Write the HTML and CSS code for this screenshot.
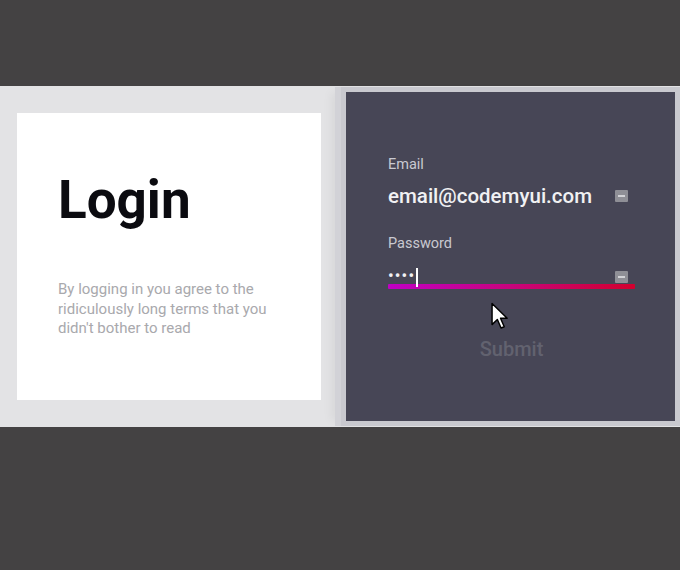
FILE: index.html
```html
<!DOCTYPE html>
<html lang="en">
<head>
<meta charset="utf-8">
<title>Login</title>
<link rel="stylesheet" href="styles.css">
</head>
<body>
<main class="stage">
  <section class="intro">
    <h1 class="intro-title">Login</h1>
    <p class="intro-text">By logging in you agree to the ridiculously long terms that you didn't bother to read</p>
  </section>

  <section class="panel">
    <form class="login-form">
      <div class="field">
        <span class="field-label">Email</span>
        <div class="field-row">
          <span class="field-value">email@codemyui.com</span>
          <span class="autofill" aria-hidden="true">
            <svg width="13" height="12" viewBox="0 0 13 12"><rect width="13" height="12" rx="1" fill="#8f8f96"/><rect x="3" y="5" width="7" height="2" fill="#d2d2d6"/></svg>
          </span>
        </div>
        <div class="field-line"></div>
      </div>

      <div class="field">
        <span class="field-label">Password</span>
        <div class="field-row">
          <span class="field-value field-secret">••••<span class="caret"></span></span>
          <span class="autofill autofill-low" aria-hidden="true">
            <svg width="13" height="12" viewBox="0 0 13 12"><rect width="13" height="12" rx="1" fill="#8f8f96"/><rect x="3" y="5" width="7" height="2" fill="#d2d2d6"/></svg>
          </span>
        </div>
        <div class="field-line field-line-active"></div>
      </div>

      <button type="button" class="submit">Submit</button>
    </form>

    <svg class="pointer" width="18" height="28" viewBox="-0.8 -0.8 13.6 20.6" aria-hidden="true">
      <path d="M0 0 L0 16 L4 12.2 L6.8 18.6 L9.2 17.6 L6.4 11.2 L11.4 11.2 Z" fill="#ffffff" stroke="#000000" stroke-width="1.1" stroke-linejoin="round"/>
    </svg>
  </section>
</main>
</body>
</html>
```

FILE: styles.css
```css
* {
  box-sizing: border-box;
}

html, body {
  margin: 0;
  padding: 0;
}

body {
  background: #444243;
  font-family: Roboto, "Noto Sans", Arial, sans-serif;
  height: 570px;
  overflow: hidden;
}

/* light strip holding both cards */
.stage {
  margin-top: 86px;
  height: 341px;
  background: #e3e3e5;
  display: flex;
  align-items: center;
  padding-left: 17px;
  gap: 25px;
}

/* white card on the left */
.intro {
  width: 304px;
  height: 287px;
  background: #ffffff;
  padding: 57px 0 0 41px;
}

.intro-title {
  margin: 0;
  font-size: 53px;
  line-height: 60px;
  font-weight: 700;
  color: #0b0b10;
}

.intro-text {
  margin: 50px 0 0;
  width: 222px;
  font-size: 15px;
  line-height: 19.5px;
  color: #a9a9ad;
  font-weight: 400;
}

/* dark form card on the right */
.panel {
  position: relative;
  width: 329px;
  height: 329px;
  background: #474656;
  box-shadow:
    0 0 0 5px #c9c9cf,
    -6px 0 0 5px #d2d2d7,
    -14px 0 10px rgba(0, 0, 0, 0.06);
  padding: 64px 40px 0 42px;
}

.login-form {
  display: flex;
  flex-direction: column;
}

.field {
  display: flex;
  flex-direction: column;
  margin-bottom: 25px;
}

.field-label {
  font-size: 14.5px;
  line-height: 17px;
  color: #c9c9d1;
  margin-bottom: 12px;
}

.field-row {
  display: flex;
  align-items: center;
  justify-content: space-between;
  height: 20px;
  padding-right: 7px;
}

.field-value {
  position: relative;
  top: 1px;
  font-size: 20.5px;
  line-height: 20px;
  font-weight: 500;
  color: #f1f1f3;
}

.field-secret {
  top: 2px;
  font-size: 16px;
  letter-spacing: 1.2px;
  display: flex;
  align-items: center;
}

.caret {
  display: inline-block;
  width: 1.5px;
  height: 19px;
  margin-left: 1px;
  background: #ffffff;
  position: relative;
  top: 1px;
}

.autofill {
  display: flex;
  position: relative;
  top: 1px;
}

.autofill-low {
  top: 3px;
}

.field-line {
  height: 5px;
}

.field-line-active {
  background: linear-gradient(90deg, #c000c4 0%, #c8047c 50%, #d2002e 100%);
  border-radius: 1px;
}

.submit {
  margin-top: 23px;
  align-self: center;
  background: none;
  border: none;
  padding: 0;
  font-family: Roboto, "Noto Sans", Arial, sans-serif;
  font-size: 20px;
  line-height: 24px;
  font-weight: 500;
  color: #62626f;
}

/* mouse pointer hovering over the form */
.pointer {
  position: absolute;
  left: 145px;
  top: 210px;
}
```
